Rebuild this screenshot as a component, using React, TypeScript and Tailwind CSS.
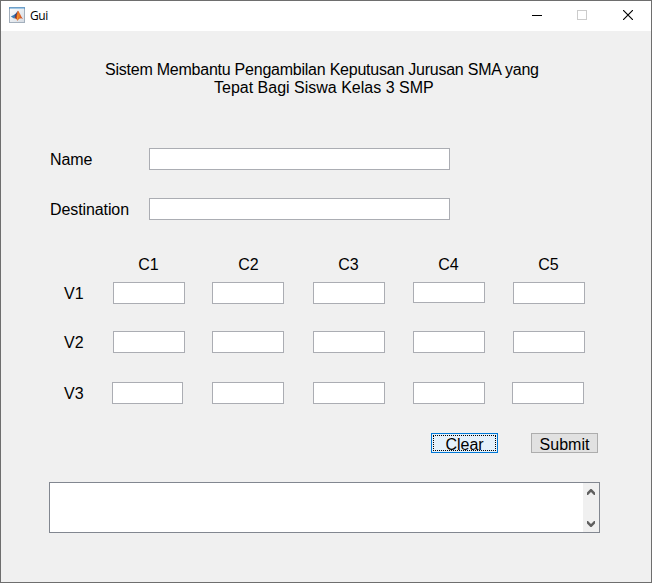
import React from 'react';

type Cell = { box: string };

const columns = ['C1', 'C2', 'C3', 'C4', 'C5'];

const rows: { label: string; className: string; cells: Cell[] }[] = [
  {
    label: 'V1',
    className: 'mt-[8px]',
    cells: [
      { box: 'ml-[29px] w-[72px] h-[22px]' },
      { box: 'ml-[27px] w-[72px] h-[22px]' },
      { box: 'ml-[29px] w-[72px] h-[22px]' },
      { box: 'ml-[28px] w-[72px] h-[21px]' },
      { box: 'ml-[28px] w-[72px] h-[22px]' },
    ],
  },
  {
    label: 'V2',
    className: 'mt-[27px]',
    cells: [
      { box: 'ml-[29px] w-[72px] h-[22px]' },
      { box: 'ml-[27px] w-[72px] h-[22px]' },
      { box: 'ml-[29px] w-[72px] h-[22px]' },
      { box: 'ml-[28px] w-[72px] h-[22px]' },
      { box: 'ml-[28px] w-[72px] h-[22px]' },
    ],
  },
  {
    label: 'V3',
    className: 'mt-[29px]',
    cells: [
      { box: 'ml-[28px] w-[71px] h-[22px]' },
      { box: 'ml-[29px] w-[72px] h-[22px]' },
      { box: 'ml-[29px] w-[72px] h-[22px]' },
      { box: 'ml-[28px] w-[72px] h-[22px]' },
      { box: 'ml-[27px] w-[72px] h-[22px]' },
    ],
  },
];

function MatlabIcon() {
  return (
    <svg width="16" height="16" viewBox="0 0 16 16" className="shrink-0">
      <defs>
        <linearGradient id="frame" x1="0" y1="0" x2="1" y2="1">
          <stop offset="0" stopColor="#ffffff" />
          <stop offset="1" stopColor="#d3dae2" />
        </linearGradient>
        <linearGradient id="peak" x1="0" y1="0" x2="1" y2="0">
          <stop offset="0" stopColor="#5e2630" />
          <stop offset="0.4" stopColor="#d6481c" />
          <stop offset="0.6" stopColor="#e8742a" />
          <stop offset="1" stopColor="#b8321a" />
        </linearGradient>
      </defs>
      <rect x="0.5" y="0.5" width="15" height="15" fill="url(#frame)" stroke="#a3afbc" />
      <rect x="0" y="0" width="16" height="2" fill="#6d9fc8" />
      <rect x="1" y="1" width="14" height="1" fill="#a4c9e6" />
      <path d="M1.8 9.5 L5.2 7.8 L7 9.4 L5 11.4 Z" fill="#3c7fb8" />
      <path d="M5.2 7.8 C6.8 7.3 7.6 5.2 8.8 3.8 L8.2 8 L6.2 10.4 Z" fill="#28508c" />
      <path d="M5 11.4 C7 10.2 7.6 6.5 8.9 3.8 C10.2 4.2 11.4 8.8 14 12 C12 10.8 10.8 11 8.4 13.8 C7.6 12 6.5 11.2 5 11.4 Z" fill="url(#peak)" />
      <path d="M8.9 4.6 C9.9 6.2 9.9 9 9.2 12.4 L8.4 13.4 L7.8 11 Z" fill="#f39a2b" />
    </svg>
  );
}

function TitleBar() {
  return (
    <header className="flex h-[30px] shrink-0 items-start bg-white">
      <div className="ml-2 mt-[6px] flex h-4">
        <MatlabIcon />
        <span className="ml-[5px] mt-px font-['Open_Sans','Noto_Sans',sans-serif] text-[12px] leading-4 tracking-[-0.4px]">Gui</span>
      </div>
      <div className="ml-auto mr-[18px] mt-[9px] flex" aria-hidden="true">
        <svg width="10" height="10" shapeRendering="crispEdges">
          <rect y="5" width="10" height="1" fill="#000" />
        </svg>
        <svg width="10" height="10" className="ml-[35px]" shapeRendering="crispEdges">
          <rect x="0.5" y="0.5" width="9" height="9" fill="none" stroke="#cccccc" />
        </svg>
        <svg width="10" height="10" className="ml-9">
          <path d="M0 0 L10 10 M10 0 L0 10" stroke="#000" strokeWidth="1.15" />
        </svg>
      </div>
    </header>
  );
}

function Field({ label, className }: { label: string; className: string }) {
  return (
    <div className={`ml-[49px] flex h-[22px] items-start ${className}`}>
      <label className="w-[99px] pt-px leading-[22px] tracking-[-0.1px]">{label}</label>
      <input className="h-[22px] w-[301px] border border-[#abadb3] bg-white outline-none" />
    </div>
  );
}

export default function App() {
  return (
    <div className="flex h-[583px] w-[652px] flex-col overflow-hidden border border-[#6e6e6e] bg-[#f0f0f0] font-['Liberation_Sans',Arial,sans-serif] text-[16px] text-black">
      <TitleBar />
      <main className="flex flex-col">
        <h1 className="ml-[104px] mt-[30px] whitespace-nowrap text-[16px] font-normal leading-[18px]">
          <span className="block tracking-[-0.235px]">Sistem Membantu Pengambilan Keputusan Jurusan SMA yang</span>
          <span className="block pl-[109px]">Tepat Bagi Siswa Kelas 3 SMP</span>
        </h1>

        <Field label="Name" className="mt-[51px]" />
        <Field label="Destination" className="mt-[28px]" />

        <section>
          <div className="ml-[97.5px] mt-9 flex h-[18px]">
            {columns.map((c) => (
              <span key={c} className="w-[100px] text-center leading-[18px]">{c}</span>
            ))}
          </div>
          {rows.map((row) => (
            <div key={row.label} className={`ml-[63px] flex h-[22px] items-start ${row.className}`}>
              <span className="w-[20px] pt-px leading-[22px]">{row.label}</span>
              {row.cells.map((cell, i) => (
                <input key={i} className={`shrink-0 border border-[#abadb3] bg-white outline-none ${cell.box}`} />
              ))}
            </div>
          ))}
        </section>

        <div className="ml-[430px] mt-[29px] flex gap-[33px]">
          <button className="h-5 w-[67px] border border-[#0078d7] bg-[#e5f1fb] p-px">
            <span className="block h-4 border border-dotted border-black leading-[18px]">Clear</span>
          </button>
          <button className="h-5 w-[67px] border border-[#adadad] bg-[#e1e1e1] pt-0.5 leading-[18px]">Submit</button>
        </div>

        <div className="ml-12 mt-[29px] flex h-[51px] w-[551px] border border-[#828790] bg-white">
          <div className="flex-1" />
          <div className="flex w-4 flex-col items-center justify-between bg-[#f0f0f0] pb-[5px] pt-[6px]">
            <svg width="8" height="6" viewBox="0 0 8 6">
              <path d="M0 3.4 L3.4 0 H4.6 L8 3.4 V6 H7 L4 3.1 L1 6 H0 Z" fill="#606060" />
            </svg>
            <svg width="8" height="6" viewBox="0 0 8 6">
              <path d="M0 2.6 L3.4 6 H4.6 L8 2.6 V0 H7 L4 2.9 L1 0 H0 Z" fill="#606060" />
            </svg>
          </div>
        </div>
      </main>
    </div>
  );
}
